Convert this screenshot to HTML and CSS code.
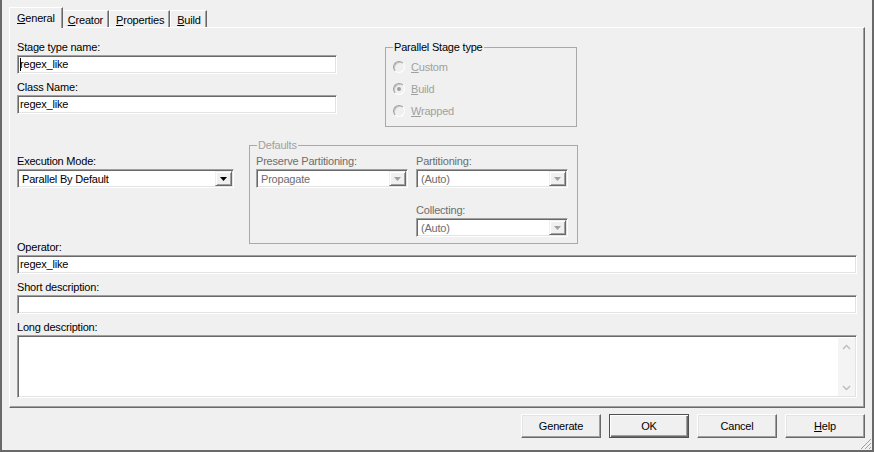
FILE: index.html
```html
<!DOCTYPE html>
<html lang="en">

<head>
    <meta charset="UTF-8">
    <title>Stage Type</title>
    <link rel="stylesheet" href="styles.css">
</head>

<body>
    <div class="window">
        <div class="tabs">
            <div class="tab active"><u>G</u>eneral</div>
            <div class="tab"><u>C</u>reator</div>
            <div class="tab"><u>P</u>roperties</div>
            <div class="tab"><u>B</u>uild</div>
        </div>

        <div class="panel">
            <div class="top-row">
                <div class="names">
                    <div class="lbl">Stage type name:</div>
                    <div class="edit"><span class="caret"></span>regex_like</div>
                    <div class="lbl">Class Name:</div>
                    <div class="edit">regex_like</div>
                </div>
                <fieldset class="group stage-type">
                    <legend>Parallel Stage type</legend>
                    <div class="radio-row"><span class="radio"></span><span><u>C</u>ustom</span></div>
                    <div class="radio-row"><span class="radio on"></span><span><u>B</u>uild</span></div>
                    <div class="radio-row"><span class="radio"></span><span><u>W</u>rapped</span></div>
                </fieldset>
            </div>

            <div class="mid-row">
                <div class="exec">
                    <div class="lbl">Execution Mode:</div>
                    <div class="combo">
                        <span class="combo-text">Parallel By Default</span>
                        <span class="combo-btn"><svg width="7" height="4" viewBox="0 0 7 4"><polygon points="0,0 7,0 3.5,4" fill="#000"/></svg></span>
                    </div>
                </div>
                <fieldset class="group defaults">
                    <legend>Defaults</legend>
                    <div class="defaults-cols">
                        <div class="col">
                            <div class="lbl">Preserve Partitioning:</div>
                            <div class="combo off">
                                <span class="combo-text">Propagate</span>
                                <span class="combo-btn"><svg width="7" height="4" viewBox="0 0 7 4"><polygon points="0,0 7,0 3.5,4" fill="#a0a0a0"/></svg></span>
                            </div>
                        </div>
                        <div class="col">
                            <div class="lbl">Partitioning:</div>
                            <div class="combo off">
                                <span class="combo-text">(Auto)</span>
                                <span class="combo-btn"><svg width="7" height="4" viewBox="0 0 7 4"><polygon points="0,0 7,0 3.5,4" fill="#a0a0a0"/></svg></span>
                            </div>
                            <div class="lbl collect">Collecting:</div>
                            <div class="combo off">
                                <span class="combo-text">(Auto)</span>
                                <span class="combo-btn"><svg width="7" height="4" viewBox="0 0 7 4"><polygon points="0,0 7,0 3.5,4" fill="#a0a0a0"/></svg></span>
                            </div>
                        </div>
                    </div>
                </fieldset>
            </div>

            <div class="lbl">Operator:</div>
            <div class="edit">regex_like</div>
            <div class="lbl">Short description:</div>
            <div class="edit"></div>
            <div class="lbl">Long description:</div>
            <div class="memo">
                <div class="vscroll">
                    <svg width="9" height="6" viewBox="0 0 9 6"><polyline points="1,5 4.5,1.5 8,5" fill="none" stroke="#bcbcbc" stroke-width="1.4"/></svg>
                    <svg width="9" height="6" viewBox="0 0 9 6"><polyline points="1,1 4.5,4.5 8,1" fill="none" stroke="#bcbcbc" stroke-width="1.4"/></svg>
                </div>
            </div>
        </div>

        <div class="buttons">
            <div class="btn">Generate</div>
            <div class="btn default">OK</div>
            <div class="btn">Cancel</div>
            <div class="btn"><span><u>H</u>elp</span></div>
        </div>

        <svg class="grip" width="12" height="12" viewBox="0 0 12 12">
            <line x1="11" y1="1" x2="1" y2="11" stroke="#a0a0a0"/>
            <line x1="11" y1="5" x2="5" y2="11" stroke="#a0a0a0"/>
            <line x1="11" y1="9" x2="9" y2="11" stroke="#a0a0a0"/>
        </svg>
    </div>
</body>

</html>
```

FILE: styles.css
```css
* {
    box-sizing: border-box;
}

body {
    margin: 0;
    background-color: #f0f0f0;
    font-family: "Liberation Sans", Arial, sans-serif;
    font-size: 11px;
    line-height: 14px;
    letter-spacing: -0.2px;
    color: #000;
}

u {
    text-decoration-thickness: 1px;
    text-underline-offset: 1px;
}

.window {
    position: relative;
    width: 874px;
    height: 452px;
    border: 2px solid #696969;
    border-top: 0;
    padding: 7px 7px 0 7px;
}

/* tab strip */
.tabs {
    display: flex;
    align-items: flex-end;
    height: 20px;
    padding-left: 2px;
}

.tab {
    height: 17px;
    padding: 2px 5px 0 6px;
    border-top: 1px solid #fff;
    border-left: 1px solid #fff;
    border-right: 1px solid #696969;
    box-shadow: inset -1px 0 #a0a0a0;
    white-space: nowrap;
}

.tab.active {
    position: relative;
    z-index: 1;
    height: 21px;
    margin: 0 -2px -1px -2px;
    padding: 3px 7px 0 7px;
    background-color: #f0f0f0;
}

.panel {
    height: 381px;
    border: 1px solid;
    border-color: #fff #696969 #696969 #fff;
    box-shadow: inset -1px -1px #a0a0a0;
    padding: 12px 7px 0 7px;
}

.lbl {
    height: 14px;
    margin-bottom: 1px;
    white-space: nowrap;
}

.edit {
    height: 19px;
    margin-bottom: 6px;
    padding: 1px 2px;
    line-height: 15px;
    background-color: #fff;
    border: 1px solid;
    border-color: #a0a0a0 #fff #fff #a0a0a0;
    box-shadow: inset 1px 1px #696969, inset -1px -1px #e3e3e3;
    white-space: nowrap;
    overflow: hidden;
}

.caret {
    display: inline-block;
    width: 1px;
    height: 13px;
    margin-right: -1px;
    vertical-align: -3px;
    background-color: #000;
}

.top-row {
    display: flex;
    align-items: flex-start;
}

.names {
    width: 320px;
}

/* group boxes */
.group {
    margin: 0;
    border: 1px solid #a9a9a9;
    min-width: 0;
}

.group legend {
    padding: 0 1px;
    line-height: 14px;
}

.stage-type {
    width: 192px;
    margin-left: 48px;
    padding: 2px 0 4px 7px;
}

.radio-row {
    display: flex;
    align-items: center;
    height: 22px;
    color: #a0a0a0;
}

.radio {
    display: flex;
    align-items: center;
    justify-content: center;
    width: 12px;
    height: 12px;
    margin-right: 6px;
    border-radius: 50%;
    border: 1px solid;
    border-color: #a0a0a0 #fff #fff #a0a0a0;
    box-shadow: inset 1px 1px #c4c4c4;
    background-color: #f0f0f0;
}

.radio.on::after {
    content: "";
    width: 4px;
    height: 4px;
    border-radius: 50%;
    background-color: #a0a0a0;
}

.mid-row {
    display: flex;
    align-items: flex-start;
    margin-top: 11px;
    margin-bottom: -4px;
}

.exec {
    width: 217px;
    padding-top: 16px;
}

.defaults {
    width: 329px;
    margin-left: 15px;
    padding: 2px 0 6px 6px;
}

.defaults legend {
    margin-left: 1px;
    color: #a0a0a0;
}

.defaults .lbl {
    color: #6d6d6d;
}

.defaults-cols {
    display: flex;
    gap: 8px;
}

.col {
    width: 152px;
}

.lbl.collect {
    margin-top: 15px;
}

/* drop-down lists */
.combo {
    display: flex;
    height: 19px;
    padding: 2px;
    background-color: #fff;
    border: 1px solid;
    border-color: #a0a0a0 #fff #fff #a0a0a0;
    box-shadow: inset 1px 1px #696969, inset -1px -1px #e3e3e3;
}

.combo-text {
    flex: 1;
    padding-left: 2px;
    line-height: 14px;
    white-space: nowrap;
}

.combo-btn {
    display: flex;
    align-items: center;
    justify-content: center;
    width: 17px;
    height: 15px;
    margin: -1px -1px 0 0;
    border: 1px solid;
    border-color: #f0f0f0 #696969 #696969 #f0f0f0;
    box-shadow: inset 1px 1px #fff, inset -1px -1px #a0a0a0;
    background-color: #f0f0f0;
}

.combo.off .combo-text {
    color: #6d6d6d;
}

.memo {
    display: flex;
    justify-content: flex-end;
    height: 63px;
    padding: 2px 1px 1px 2px;
    background-color: #fff;
    border: 1px solid;
    border-color: #a0a0a0 #fff #fff #a0a0a0;
    box-shadow: inset 1px 1px #696969, inset -1px -1px #e3e3e3;
}

.vscroll {
    display: flex;
    flex-direction: column;
    justify-content: space-between;
    align-items: center;
    width: 17px;
    padding: 6px 0 5px 0;
    background-color: #f4f4f4;
}

/* bottom buttons */
.buttons {
    display: flex;
    justify-content: flex-end;
    gap: 8px;
    margin-top: 6px;
}

.btn {
    display: flex;
    align-items: center;
    justify-content: center;
    width: 80px;
    height: 24px;
    border: 1px solid;
    border-color: #fff #696969 #696969 #fff;
    box-shadow: inset -1px -1px #a0a0a0, inset 1px 1px #e3e3e3;
    background-color: #f0f0f0;
}

.btn.default {
    border-color: #505050;
    box-shadow: inset 1px 1px #fff, inset -1px -1px #696969, inset -2px -2px #a0a0a0;
}

.grip {
    position: absolute;
    right: 0;
    bottom: 0;
}
```
